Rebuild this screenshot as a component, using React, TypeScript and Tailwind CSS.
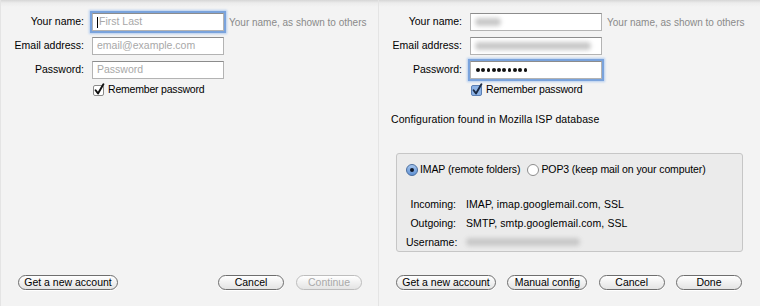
import React from "react";

const font = "font-['Liberation_Sans','Arial',sans-serif]";

type BtnProps = { label: string; w: string; disabled?: boolean };
const Button = ({ label, w, disabled }: BtnProps) => (
  <div
    className={`${w} h-[15px] flex items-center justify-center rounded-full border text-[10.5px] leading-none bg-[linear-gradient(to_bottom,#ffffff,#f1f1f1_50%,#e4e4e4)] ${
      disabled ? "border-[#bdbdbd] text-[#a9a9a9]" : "border-[#6e6e6e] text-black shadow-[0_1px_0_#ffffff]"
    }`}
  >
    {label}
  </div>
);

const Blur = ({ w }: { w: string }) => (
  <div className={`${w} h-[8px] bg-[#c9c9c9] blur-[2px] rounded-sm`} />
);

type InputProps = { children?: React.ReactNode; focused?: boolean };
const Field = ({ children, focused }: InputProps) => (
  <div
    className={`w-[132px] h-[18px] bg-white border border-[#b3b3b3] border-t-[#8c8c8c] flex items-center pl-[4px] ${
      focused ? "shadow-[0_0_0_2px_#7aa3dc,0_0_2px_3px_#b4cdef]" : ""
    }`}
  >
    {children}
  </div>
);

const Check = ({ blue }: { blue?: boolean }) => (
  <svg width="13" height="14" viewBox="0 0 13 14">
    <rect
      x="0.5"
      y="2.5"
      width="10"
      height="10"
      rx="1.5"
      fill={blue ? "#8db3e6" : "#ffffff"}
      stroke={blue ? "#5b7fb4" : "#8a8a8a"}
    />
    <path d="M2.6 7.2 L5 10.4 L10.4 1.2" fill="none" stroke={blue ? "#1b2b45" : "#111"} strokeWidth="1.9" strokeLinecap="round" strokeLinejoin="round" />
  </svg>
);

const Radio = ({ on }: { on?: boolean }) =>
  on ? (
    <svg width="12" height="12" viewBox="0 0 12 12">
      <defs>
        <linearGradient id="rg" x1="0" y1="0" x2="0" y2="1">
          <stop offset="0" stopColor="#a9c8ef" />
          <stop offset="1" stopColor="#5d8fd3" />
        </linearGradient>
      </defs>
      <circle cx="6" cy="6" r="5.5" fill="url(#rg)" stroke="#4c6f9f" />
      <circle cx="6" cy="6" r="2" fill="#10182a" />
    </svg>
  ) : (
    <svg width="12" height="12" viewBox="0 0 12 12">
      <circle cx="6" cy="6" r="5.5" fill="#ffffff" stroke="#8c8c8c" />
    </svg>
  );

const Dots = () => (
  <div className="flex gap-[1.6px] pl-px">
    {Array.from({ length: 10 }).map((_, i) => (
      <div key={i} className="w-[3.7px] h-[3.7px] rounded-full bg-[#111]" />
    ))}
  </div>
);

type FormProps = { right?: boolean };
const Form = ({ right }: FormProps) => (
  <div className="flex flex-col">
    <div className="grid grid-cols-[83px_132px_auto] gap-x-[8px] gap-y-[6px] items-center pt-[13px]">
      <div className="text-right text-[10.5px] text-black">Your name:</div>
      <Field focused={!right}>
        {right ? (
          <Blur w="w-[26px]" />
        ) : (
          <span className="flex items-center text-[10.5px] text-[#a8a8a8]">
            <span className="w-px h-[11px] bg-black mr-[1px]" />
            First Last
          </span>
        )}
      </Field>
      <div className="-ml-[3px] text-[10px] text-[#8a8a8a] whitespace-nowrap">
        Your name, as shown to others
      </div>

      <div className="text-right text-[10.5px] text-black whitespace-nowrap">Email address:</div>
      <Field>
        {right ? <Blur w="w-[116px]" /> : <span className="text-[10.5px] text-[#a8a8a8]">email@example.com</span>}
      </Field>
      <div />

      <div className="text-right text-[10.5px] text-black">Password:</div>
      <Field focused={right}>
        {right ? <Dots /> : <span className="text-[10.5px] text-[#a8a8a8]">Password</span>}
      </Field>
      <div />
    </div>
    <div className="flex items-center mt-[4px] ml-[92px] h-[14px] gap-[2px]">
      <Check blue={right} />
      <span className="text-[10.5px] tracking-[-0.2px] text-black">Remember password</span>
    </div>
  </div>
);

const App = () => {
  return (
    <div
      className={`${font} w-[760px] h-[306px] flex bg-[linear-gradient(to_bottom,#d6d6d6,#ececec_3px,#f3f3f3_7px)] text-black overflow-hidden`}
    >
      <div className="w-[379px] h-full flex flex-col border-l border-[#e4e4e4] border-r">
        <Form />
        <div className="mt-auto pb-[16px] pl-[17px] pr-[16px] flex items-center">
          <Button label="Get a new account" w="w-[100px]" />
          <div className="ml-auto flex gap-[12px]">
            <Button label="Cancel" w="w-[66px]" />
            <Button label="Continue" w="w-[66px]" disabled />
          </div>
        </div>
      </div>

      <div className="flex-1 h-full flex flex-col">
        <Form right />
        <div className="mt-[16px] ml-[12px] text-[10.5px] tracking-[0.1px] h-[12px] leading-[12px]">
          Configuration found in Mozilla ISP database
        </div>
        <div className="mt-[28px] mx-[17px] h-[99px] rounded-[3px] border border-[#c6c6c6] bg-[#ebebeb] flex flex-col pl-[9px] pt-[10px]">
          <div className="flex items-center h-[12px] gap-[2px] text-[10.5px] tracking-[-0.1px]">
            <Radio on />
            <span>IMAP (remote folders)</span>
            <span className="ml-[3px]" />
            <Radio />
            <span>POP3 (keep mail on your computer)</span>
          </div>
          <div className="grid grid-cols-[50px_auto] gap-x-[10px] gap-y-[7px] mt-[22px] text-[10.5px] leading-[12px]">
            <div className="text-right">Incoming:</div>
            <div className="tracking-[0.1px]">IMAP, imap.googlemail.com, SSL</div>
            <div className="text-right">Outgoing:</div>
            <div className="tracking-[0.1px]">SMTP, smtp.googlemail.com, SSL</div>
            <div className="text-right">Username:</div>
            <div className="flex items-center">
              <Blur w="w-[114px]" />
            </div>
          </div>
        </div>
        <div className="mt-auto pb-[16px] pl-[17px] pr-[18px] flex items-center justify-between">
          <Button label="Get a new account" w="w-[100px]" />
          <Button label="Manual config" w="w-[80px]" />
          <Button label="Cancel" w="w-[66px]" />
          <Button label="Done" w="w-[66px]" />
        </div>
      </div>
    </div>
  );
};

export default App;
